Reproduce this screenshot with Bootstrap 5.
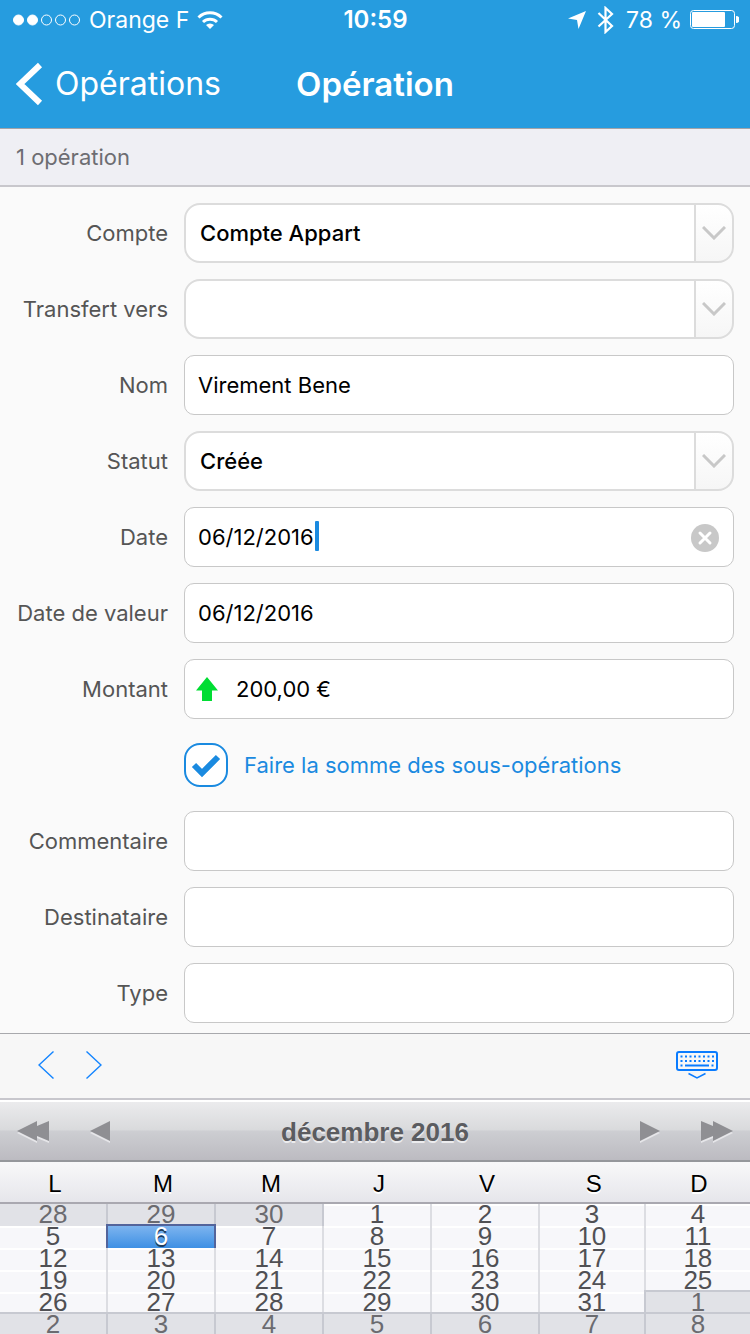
<!DOCTYPE html>
<html lang="fr">
<head>
<meta charset="utf-8">
<meta name="viewport" content="width=device-width, initial-scale=1">
<title>Opération</title>
<link href="https://cdn.jsdelivr.net/npm/bootstrap@5.3.0/dist/css/bootstrap.min.css" rel="stylesheet">
<style>
  body { font-family: Inter, "Liberation Sans", sans-serif; font-size: 22px; line-height: 28px; background: #fafafa; color: #000; }
  button { color: inherit; }
  svg { display: block; flex: none; }

  /* header */
  .app-head { background: #269cdf; color: #fff; border-bottom: 1px solid #a3a3a8; }
  .status-bar { height: 40px; padding: 0 11px 0 12px; font-size: 23px; }
  .status-side { flex: 1 1 0; }
  .clock { font-size: 24px; font-weight: 600; }
  .title-bar { height: 88px; padding: 0 16px; font-size: 32px; line-height: 40px; }
  .title-side { flex: 1 1 0; }
  .page-title { font-size: 33px; line-height: 40px; }
  .back-link, .back-link:hover { color: #fff; }
  .back-text { margin-left: 12px; }
  .count-bar { background: #efeff4; color: #6d6d72; border-bottom: 2px solid #c8c7cc; padding: 14px 16px; }

  /* form */
  .op-form { padding: 16px 16px 10px 0; }
  .field-label { width: 168px; color: #555; text-align: right; white-space: nowrap; }
  .field-box { height: 60px; font-size: 22px; color: #000; border-radius: 10px; border: 1px solid #c8c8c8; padding: 0 13px; background-color: #fff; }
  .form-select.field-box { border: 2px solid #dcdcdc; border-radius: 16px; font-weight: 500; padding: 0 50px 0 14px;
    background-image:
      url("data:image/svg+xml,%3csvg xmlns='http://www.w3.org/2000/svg' viewBox='0 0 24 14'%3e%3cpath d='M1 1 12 12 23 1' fill='none' stroke='%23c8c8c8' stroke-width='3'/%3e%3c/svg%3e"),
      linear-gradient(#fff, #f6f6f6),
      linear-gradient(#dcdcdc, #dcdcdc);
    background-size: 24px 14px, 36px 100%, 38px 100%;
    background-position: right 6px center, right center, right center;
    background-repeat: no-repeat; }
  .form-control.field-box:focus { box-shadow: none; }
  .form-control.amount-box { padding-left: 51px; }
  .amount-arrow { left: 12px; top: 18px; }
  .caret { left: 131px; top: 14px; width: 4px; height: 30px; border-radius: 1px; background: #1a8ae0; }
  .clear-btn { right: 14px; top: 16px; }
  .sum-row { padding: 8px 0 8px 184px; }
  .form-check-input.sum-check { width: 44px; height: 44px; margin: 0; float: none; border: 2px solid #1a8ae0; border-radius: 16px; background-color: #fff; }
  .form-check-input.sum-check:checked { background-color: #fff; border-color: #1a8ae0; background-size: 40px 40px;
    background-image: url("data:image/svg+xml,%3csvg xmlns='http://www.w3.org/2000/svg' viewBox='0 0 40 40'%3e%3cpath d='M8 20 16 28 32 12' fill='none' stroke='%231a8ae0' stroke-width='6'/%3e%3c/svg%3e"); }
  .sum-label { color: #1a8ae0; }

  /* keyboard toolbar */
  .key-bar { background: #f7f7f7; border-top: 1px solid #a8a9ad; border-bottom: 2px solid #c8c7cd; height: 67px; padding: 0 32px 2px 38px; }

  /* calendar */
  .calendar { font-family: "Liberation Sans", sans-serif; }
  .month-bar { height: 62px; padding: 2px 16px 0; border-top: 2px solid #fff; border-bottom: 2px solid #95979b;
    background: linear-gradient(#ebebed, #d9dadc 48%, #cdced2 50%, #bcbbc1); }
  .month-name { font-size: 26px; font-weight: 700; color: #5b5c60; text-shadow: 0 2px 0 #ececee; }
  .month-side { flex: 1 1 0; }
  .month-table { table-layout: fixed; width: 100%; border-collapse: separate; border-spacing: 0; }
  .c-day { width: 14.4%; }
  .c-sat { width: 14.1%; }
  .month-table th { height: 42px; padding: 4px 0 0 2px; font-size: 24px; line-height: 36px; font-weight: 400; text-align: center;
    background: linear-gradient(#f8f8f9, #e6e6eb); border-bottom: 2px solid #a9a8b0; text-shadow: 0 2px 0 #fff; }
  .month-table td { height: 22px; padding: 0; vertical-align: top; border-right: 2px solid #dcdde2;
    background: linear-gradient(#fff 2px, #f7f7fa 2px); color: #505054; }
  .month-table td:last-child { border-right: 0; }
  .month-table tr:last-child td { height: 20px; }
  .month-table td.off { background: #e1e2e7; border-right-color: #c7c9d1; color: #6b6b70; }
  .month-table td.off-next { box-shadow: 0 -2px #c7c9d1; }
  .month-table td.off-first { box-shadow: 0 -2px #c7c9d1, -2px 0 #c7c9d1, -2px -2px #c7c9d1; }
  .month-table td.picked { background: linear-gradient(#7db4ef, #3e90e4); border-right-color: #53649b; color: #fff; text-shadow: 0 2px 0 #1d3a5c;
    box-shadow: 0 -2px #53649b, -2px 0 #53649b, -2px -2px #53649b; }
  .day-btn { display: block; width: 100%; height: 20px; border: 0; padding: 0; background: none; font-size: 26px; line-height: 20px; text-shadow: inherit; }
</style>
</head>
<body>
<header class="app-head">
  <div class="status-bar d-flex align-items-center">
    <div class="status-side d-flex align-items-center">
      <svg width="69" height="14" viewBox="0 0 69 14" aria-hidden="true"><g fill="#fff" stroke="#fff"><circle cx="6.500" cy="7" r="5"/><circle cx="20.500" cy="7" r="5"/><g fill="none"><circle cx="34.500" cy="7" r="5"/><circle cx="48.500" cy="7" r="5"/><circle cx="62.500" cy="7" r="5"/></g></g></svg>
      <span class="ms-2">Orange F</span>
      <svg class="ms-2" width="26" height="20" viewBox="0 0 26 20" aria-hidden="true"><g fill="none" stroke="#fff" stroke-width="3"><path d="M1.500 7.500a16.500 16.500 0 0 1 23 0"/><path d="M6 12a10.200 10.200 0 0 1 14 0"/></g><path d="M13 19 9 15a5.800 5.800 0 0 1 8 0z" fill="#fff"/></svg>
    </div>
    <span class="clock">10:59</span>
    <div class="status-side d-flex align-items-center justify-content-end">
      <svg width="18" height="18" viewBox="0 0 18 18" aria-hidden="true"><path d="M18 0 10.500 18 9 9 0 7.500z" fill="#fff"/></svg>
      <svg class="ms-2" width="24" height="28" viewBox="0 0 24 28" aria-hidden="true"><path d="M4.500 7 18 20l-6.500 6V2L18 8 4.500 20.500" fill="none" stroke="#fff" stroke-width="2.200"/></svg>
      <span class="ms-2">78 %</span>
      <svg class="ms-2" width="49" height="20" viewBox="0 0 49 20" aria-hidden="true"><rect x=".5" y=".5" width="44" height="18" rx="3" fill="none" stroke="#fff"/><rect x="2" y="2" width="33" height="15" rx="1" fill="#fff"/><path d="M46 6a3.500 3.500 0 0 1 0 7z" fill="#fff"/></svg>
    </div>
  </div>
  <nav class="title-bar d-flex align-items-center">
    <div class="title-side d-flex">
      <a href="#" class="back-link d-flex align-items-center text-decoration-none">
        <svg width="27" height="44" viewBox="0 0 27 44" aria-hidden="true"><path d="M24 3 4 22 24 41" fill="none" stroke="#fff" stroke-width="6"/></svg>
        <span class="back-text">Opérations</span>
      </a>
    </div>
    <h1 class="page-title fw-semibold m-0">Opération</h1>
    <div class="title-side"></div>
  </nav>
</header>

<div class="count-bar">1 opération</div>

<form class="op-form d-flex flex-column gap-3">
  <div class="d-flex align-items-center gap-3">
    <label class="field-label flex-shrink-0" for="compte">Compte</label>
    <select class="form-select field-box" id="compte"><option>Compte Appart</option></select>
  </div>
  <div class="d-flex align-items-center gap-3">
    <label class="field-label flex-shrink-0" for="transfert">Transfert vers</label>
    <select class="form-select field-box" id="transfert"><option></option></select>
  </div>
  <div class="d-flex align-items-center gap-3">
    <label class="field-label flex-shrink-0" for="nom">Nom</label>
    <input class="form-control field-box" id="nom" type="text" value="Virement Bene">
  </div>
  <div class="d-flex align-items-center gap-3">
    <label class="field-label flex-shrink-0" for="statut">Statut</label>
    <select class="form-select field-box" id="statut"><option>Créée</option></select>
  </div>
  <div class="d-flex align-items-center gap-3">
    <label class="field-label flex-shrink-0" for="date">Date</label>
    <div class="position-relative flex-grow-1">
      <input class="form-control field-box" id="date" type="text" value="06/12/2016">
      <span class="caret position-absolute"></span>
      <button type="button" class="clear-btn btn border-0 p-0 position-absolute" aria-label="Effacer">
        <svg width="30" height="30" viewBox="0 0 30 30" aria-hidden="true"><circle cx="15" cy="15" r="14" fill="#c8c8c8"/><path d="m10 10 10 10M20 10 10 20" stroke="#fff" stroke-width="3" stroke-linecap="round"/></svg>
      </button>
    </div>
  </div>
  <div class="d-flex align-items-center gap-3">
    <label class="field-label flex-shrink-0" for="valeur">Date de valeur</label>
    <input class="form-control field-box" id="valeur" type="text" value="06/12/2016">
  </div>
  <div class="d-flex align-items-center gap-3">
    <label class="field-label flex-shrink-0" for="montant">Montant</label>
    <div class="position-relative flex-grow-1">
      <input class="form-control field-box amount-box" id="montant" type="text" value="200,00 €">
      <svg class="amount-arrow position-absolute" width="22" height="24" viewBox="0 0 22 24" aria-hidden="true"><path d="M11 0 22 13.500H16V24H6V13.500H0z" fill="#0d3"/></svg>
    </div>
  </div>
  <div class="sum-row d-flex align-items-center gap-3">
    <input class="form-check-input sum-check flex-shrink-0" id="somme" type="checkbox" checked>
    <label class="sum-label" for="somme">Faire la somme des sous-opérations</label>
  </div>
  <div class="d-flex align-items-center gap-3">
    <label class="field-label flex-shrink-0" for="commentaire">Commentaire</label>
    <input class="form-control field-box" id="commentaire" type="text">
  </div>
  <div class="d-flex align-items-center gap-3">
    <label class="field-label flex-shrink-0" for="destinataire">Destinataire</label>
    <input class="form-control field-box" id="destinataire" type="text">
  </div>
  <div class="d-flex align-items-center gap-3">
    <label class="field-label flex-shrink-0" for="type">Type</label>
    <input class="form-control field-box" id="type" type="text">
  </div>
</form>

<div class="key-bar d-flex align-items-center">
  <button type="button" class="btn border-0 p-0" aria-label="Champ précédent"><svg width="16" height="28" viewBox="0 0 16 28" aria-hidden="true"><path d="M15.500.5 1 14l14.500 13.500" fill="none" stroke="#1485ff" stroke-width="1.400"/></svg></button>
  <button type="button" class="btn border-0 p-0 ms-3 ps-3" aria-label="Champ suivant"><svg width="16" height="28" viewBox="0 0 16 28" aria-hidden="true"><path d="M.5.5 15 14 .5 27.500" fill="none" stroke="#1485ff" stroke-width="1.400"/></svg></button>
  <button type="button" class="btn border-0 p-0 ms-auto" aria-label="Masquer le clavier">
    <svg width="42" height="28" viewBox="0 0 42 28" aria-hidden="true"><g fill="none" stroke="#0a7cff"><rect x="1" y="1" width="40" height="18" rx="2" stroke-width="2"/><path d="M4.500 5.500h34M4.500 10h34" stroke-width="2" stroke-dasharray="2 2.500"/><path d="M4.500 14.500h2M9 14.500h24M35.500 14.500h2" stroke-width="1.800"/><path d="m12.500 22.500 8.500 4.500 8.500-4.500" stroke-width="1.500"/></g></svg>
  </button>
</div>

<section class="calendar">
  <div class="month-bar d-flex align-items-center">
    <div class="month-side d-flex align-items-center">
      <button type="button" class="btn border-0 p-0" aria-label="Année précédente"><svg width="34" height="24" viewBox="0 0 34 24" aria-hidden="true"><path d="M1 13 21 3v5L33 3v20l-12-5v5z" fill="#e6e6e9"/><path d="M1 11 21 1v5l12-5v20l-12-5v5z" fill="#8f8f93"/></svg></button>
      <button type="button" class="btn border-0 p-0 ms-4 ps-3" aria-label="Mois précédent"><svg width="21" height="24" viewBox="0 0 21 24" aria-hidden="true"><path d="M0 13 20 3v20z" fill="#e6e6e9"/><path d="M0 11 20 1v20z" fill="#8f8f93"/></svg></button>
    </div>
    <span class="month-name">décembre 2016</span>
    <div class="month-side d-flex align-items-center justify-content-end">
      <button type="button" class="btn border-0 p-0 me-4 pe-3" aria-label="Mois suivant"><svg width="21" height="24" viewBox="0 0 21 24" aria-hidden="true"><path d="M21 13 1 3v20z" fill="#e6e6e9"/><path d="M21 11 1 1v20z" fill="#8f8f93"/></svg></button>
      <button type="button" class="btn border-0 p-0" aria-label="Année suivante"><svg width="34" height="24" viewBox="0 0 34 24" aria-hidden="true"><path d="M33 13 13 3v5L1 3v20l12-5v5z" fill="#e6e6e9"/><path d="M33 11 13 1v5L1 1v20l12-5v5z" fill="#8f8f93"/></svg></button>
    </div>
  </div>
  <table class="month-table">
    <colgroup><col class="c-day"><col class="c-day"><col class="c-day"><col class="c-day"><col class="c-day"><col class="c-sat"><col></colgroup>
    <thead><tr><th>L</th><th>M</th><th>M</th><th>J</th><th>V</th><th>S</th><th>D</th></tr></thead>
    <tbody>
      <tr><td class="off"><button class="day-btn">28</button></td><td class="off"><button class="day-btn">29</button></td><td class="off"><button class="day-btn">30</button></td><td><button class="day-btn">1</button></td><td><button class="day-btn">2</button></td><td><button class="day-btn">3</button></td><td><button class="day-btn">4</button></td></tr>
      <tr><td><button class="day-btn">5</button></td><td class="picked"><button class="day-btn">6</button></td><td><button class="day-btn">7</button></td><td><button class="day-btn">8</button></td><td><button class="day-btn">9</button></td><td><button class="day-btn">10</button></td><td><button class="day-btn">11</button></td></tr>
      <tr><td><button class="day-btn">12</button></td><td><button class="day-btn">13</button></td><td><button class="day-btn">14</button></td><td><button class="day-btn">15</button></td><td><button class="day-btn">16</button></td><td><button class="day-btn">17</button></td><td><button class="day-btn">18</button></td></tr>
      <tr><td><button class="day-btn">19</button></td><td><button class="day-btn">20</button></td><td><button class="day-btn">21</button></td><td><button class="day-btn">22</button></td><td><button class="day-btn">23</button></td><td><button class="day-btn">24</button></td><td><button class="day-btn">25</button></td></tr>
      <tr><td><button class="day-btn">26</button></td><td><button class="day-btn">27</button></td><td><button class="day-btn">28</button></td><td><button class="day-btn">29</button></td><td><button class="day-btn">30</button></td><td><button class="day-btn">31</button></td><td class="off off-first"><button class="day-btn">1</button></td></tr>
      <tr><td class="off off-next"><button class="day-btn">2</button></td><td class="off off-next"><button class="day-btn">3</button></td><td class="off off-next"><button class="day-btn">4</button></td><td class="off off-next"><button class="day-btn">5</button></td><td class="off off-next"><button class="day-btn">6</button></td><td class="off off-next"><button class="day-btn">7</button></td><td class="off off-next"><button class="day-btn">8</button></td></tr>
    </tbody>
  </table>
</section>
<script src="https://cdn.jsdelivr.net/npm/bootstrap@5.3.0/dist/js/bootstrap.bundle.min.js"></script>
</body>
</html>
